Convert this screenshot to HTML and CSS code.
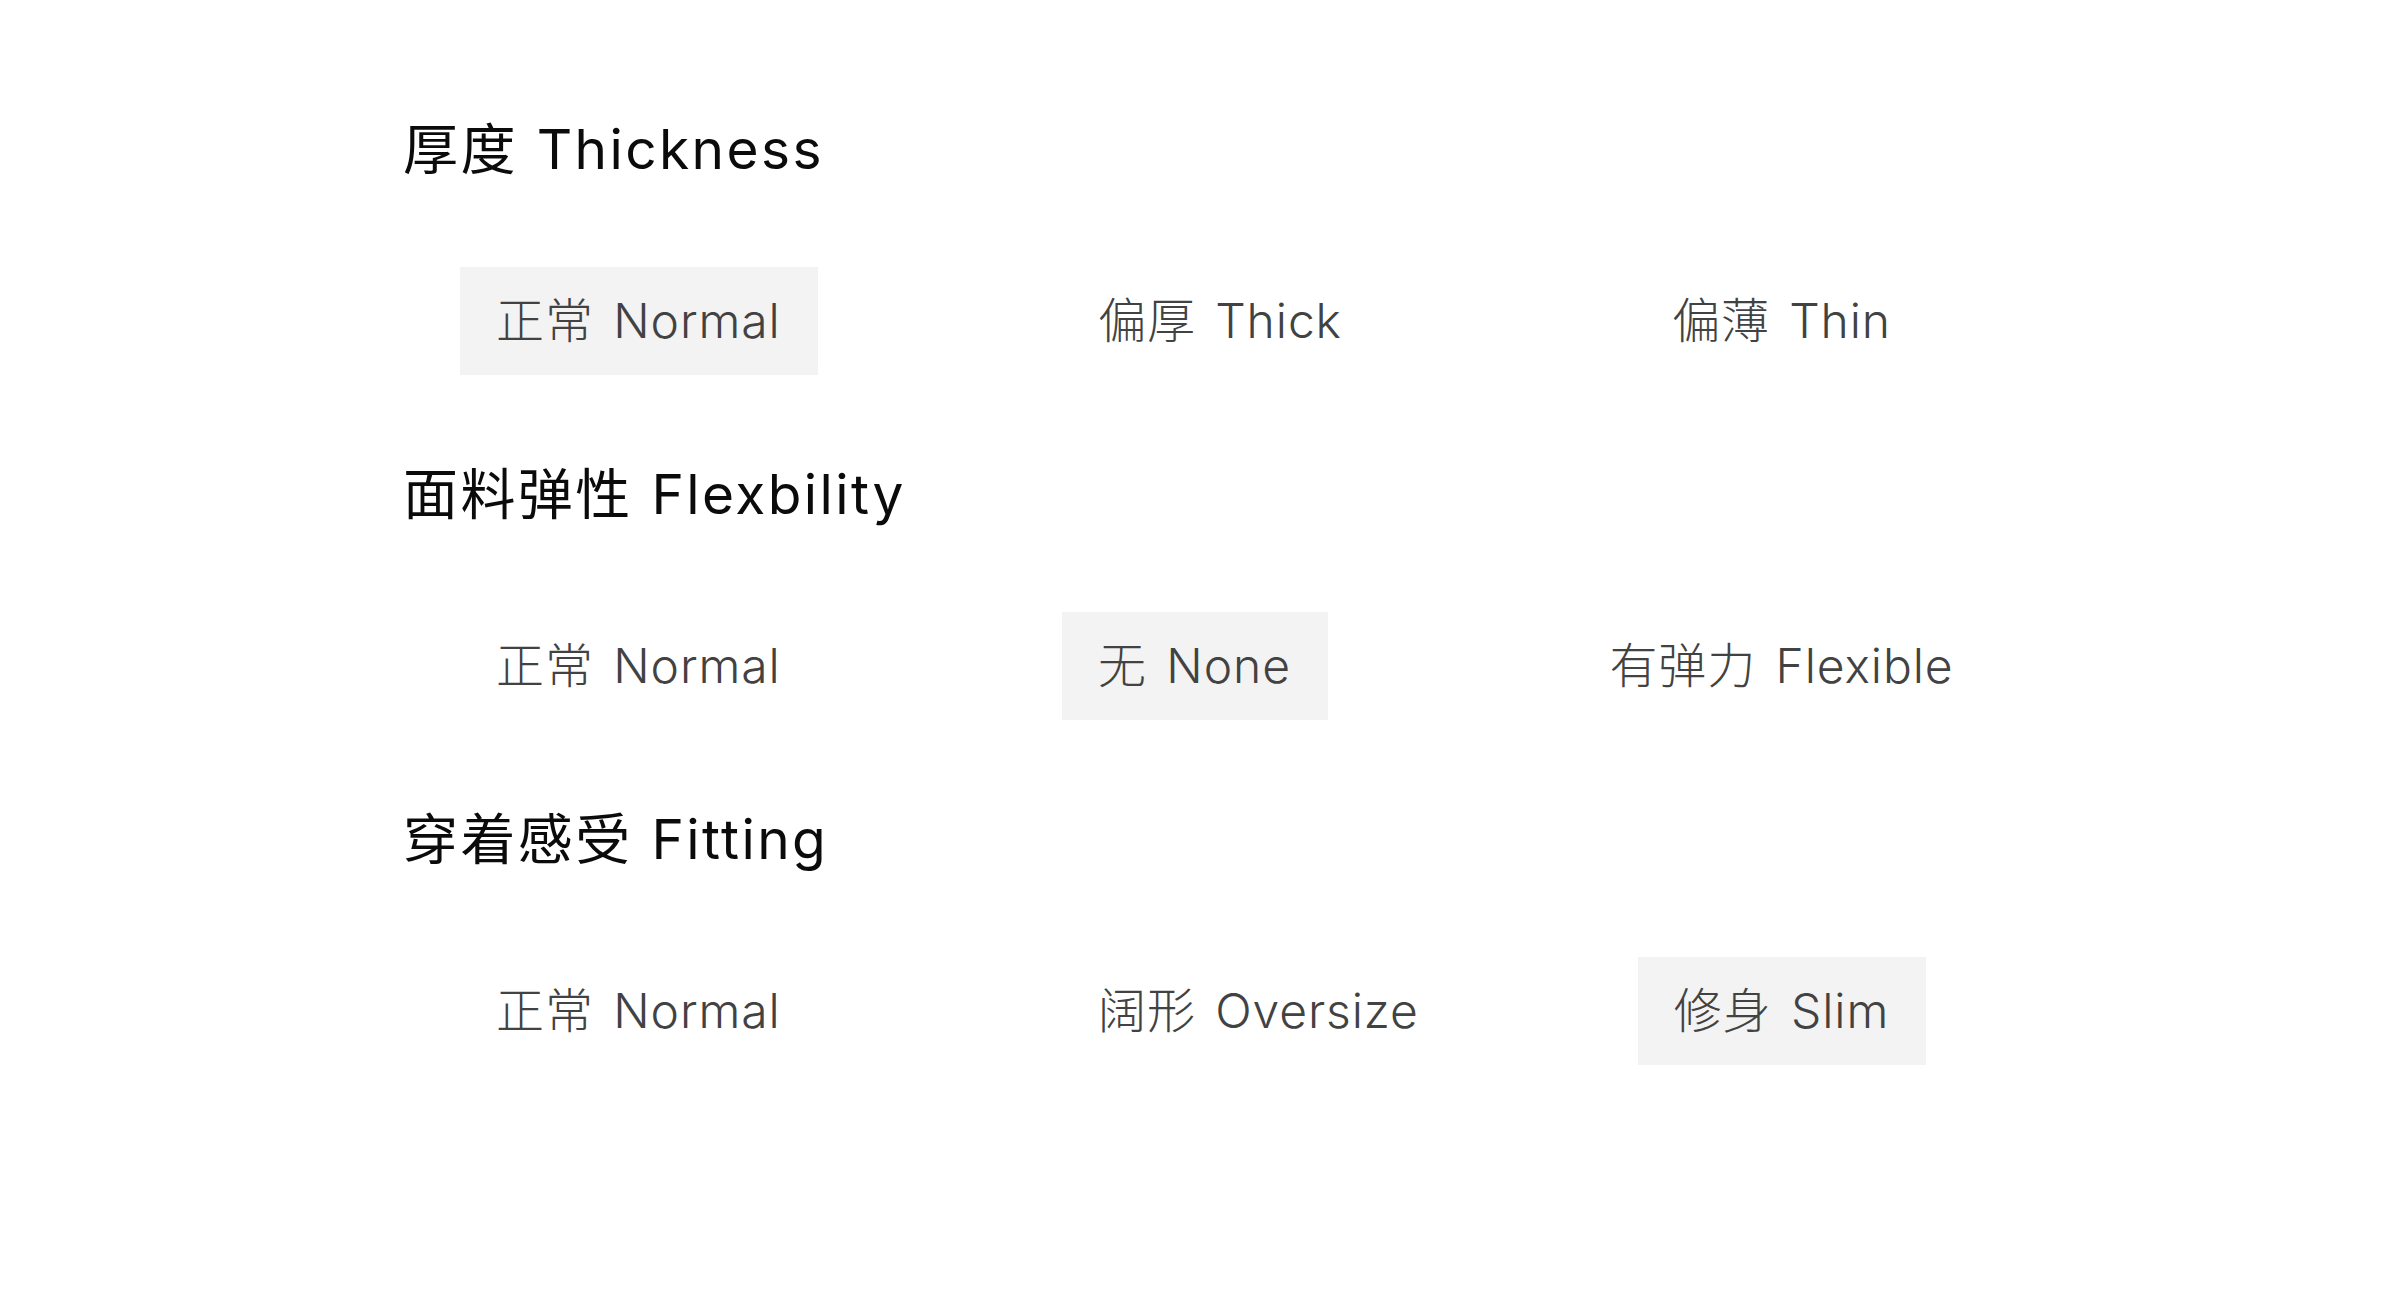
FILE: index.html
```html
<!DOCTYPE html>
<html lang="zh-CN">
<head>
<meta charset="utf-8">
<title>Options</title>
<link rel="stylesheet" href="styles.css">
</head>
<body>
<main class="page">
  <section class="group">
    <h2 class="title">厚度 Thickness</h2>
    <div class="options">
      <div class="opt c1 selected">正常 Normal</div>
      <div class="opt c2">偏厚 Thick</div>
      <div class="opt c3">偏薄 Thin</div>
    </div>
  </section>
  <section class="group">
    <h2 class="title">面料弹性 Flexbility</h2>
    <div class="options">
      <div class="opt c1">正常 Normal</div>
      <div class="opt c2 selected">无 None</div>
      <div class="opt c3">有弹力 Flexible</div>
    </div>
  </section>
  <section class="group">
    <h2 class="title">穿着感受 Fitting</h2>
    <div class="options">
      <div class="opt c1">正常 Normal</div>
      <div class="opt c2">阔形 Oversize</div>
      <div class="opt c3 selected">修身 Slim</div>
    </div>
  </section>
</main>
</body>
</html>
```
FILE: styles.css
```css
html, body {
  margin: 0;
  padding: 0;
  background: #ffffff;
}
body {
  font-family: "Inter", "Noto Sans CJK SC", sans-serif;
}
.page {
  padding: 122px 0 0 403px;
}
.group {
  margin-bottom: 92px;
}
.title {
  margin: 0 0 90px 0;
  font-size: 55px;
  line-height: 55px;
  font-weight: 400;
  color: #0b0b0b;
  letter-spacing: 2.4px;
  word-spacing: 1px;
}
.options {
  display: grid;
  grid-template-columns: 602px 520px 400px;
  margin-left: 57px;
  align-items: center;
}
.opt {
  padding: 26px 37px 26px 36px;
  font-size: 48px;
  line-height: 56px;
  font-weight: 300;
  color: #424242;
  white-space: nowrap;
  letter-spacing: 0.9px;
  word-spacing: 5px;
}
.c1, .c2 {
  justify-self: start;
}
.c3 {
  justify-self: center;
}
.selected {
  background: #f3f3f3;
}
```
